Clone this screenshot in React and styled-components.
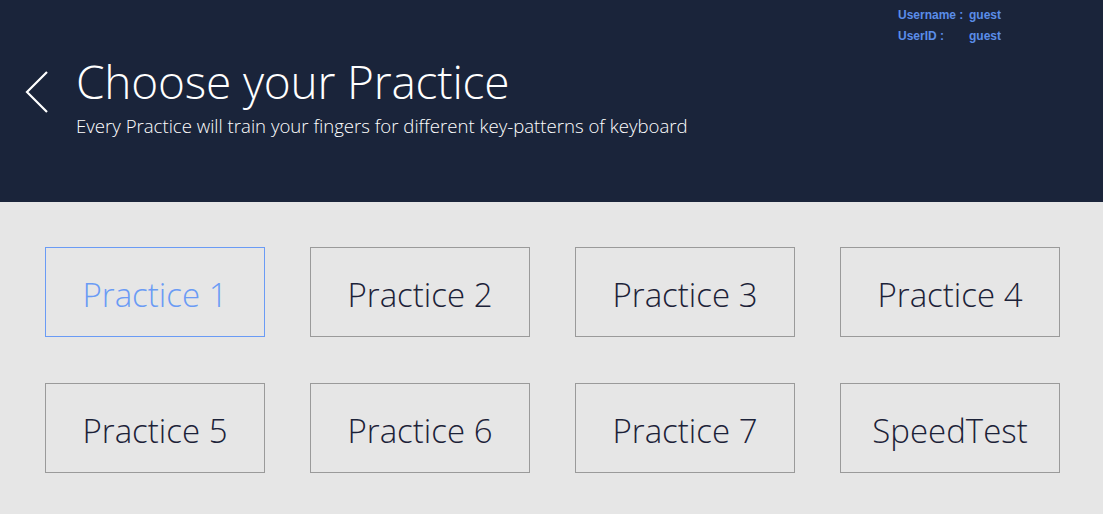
import React from "react";
import styled, { createGlobalStyle } from "styled-components";

const GlobalStyle = createGlobalStyle`
  html, body {
    margin: 0;
    padding: 0;
    background: #e6e6e6;
  }
  body {
    font-family: "Open Sans", "Noto Sans", sans-serif;
  }
`;

const Page = styled.div`
  width: 1103px;
  height: 514px;
  overflow: hidden;
  background: #e6e6e6;
`;

const Header = styled.header`
  height: 202px;
  background: #1a243a;
  position: relative;
  box-sizing: border-box;
  padding: 51px 0 0 24px;
  display: flex;
  align-items: flex-start;
`;

const BackButton = styled.button`
  background: none;
  border: none;
  padding: 0;
  margin: 19px 26px 0 0;
  width: 26px;
  height: 44px;
  cursor: pointer;
  display: flex;
`;

const TitleBlock = styled.div`
  display: flex;
  flex-direction: column;
`;

const Title = styled.h1`
  margin: 0;
  font-weight: 300;
  font-size: 46px;
  line-height: 60px;
  color: #ffffff;
  letter-spacing: -0.2px;
`;

const Subtitle = styled.p`
  margin: 3px 0 0;
  font-weight: 300;
  font-size: 18.6px;
  line-height: 24px;
  color: #ffffff;
`;

const UserInfo = styled.div`
  position: absolute;
  top: 8px;
  left: 898px;
  display: grid;
  grid-template-columns: 71px auto;
  row-gap: 7px;
  font-family: "Liberation Sans", Arial, sans-serif;
  font-weight: bold;
  font-size: 12px;
  line-height: 14px;
  color: #5b8de8;
`;

const Grid = styled.main`
  display: grid;
  grid-template-columns: repeat(4, 220px);
  grid-auto-rows: 90px;
  column-gap: 45px;
  row-gap: 46px;
  padding: 45px 0 0 45px;
`;

const Card = styled.button`
  box-sizing: border-box;
  background: transparent;
  border: 1px solid ${({ active }) => (active ? "#6a9bf5" : "#9a9a9a")};
  color: ${({ active }) => (active ? "#6a9bf5" : "#1c2238")};
  font-family: "Open Sans", "Noto Sans", sans-serif;
  font-weight: 300;
  font-size: 33px;
  padding: 5px 0 0;
  cursor: pointer;
  display: flex;
  align-items: center;
  justify-content: center;
`;

const practices = [
  "Practice 1",
  "Practice 2",
  "Practice 3",
  "Practice 4",
  "Practice 5",
  "Practice 6",
  "Practice 7",
  "SpeedTest",
];

export default function App() {
  return (
    <Page>
      <GlobalStyle />
      <Header>
        <BackButton aria-label="back">
          <svg width="26" height="44" viewBox="0 0 26 44">
            <polyline
              points="23,2 3,22 23,42"
              fill="none"
              stroke="#ffffff"
              strokeWidth="2.2"
            />
          </svg>
        </BackButton>
        <TitleBlock>
          <Title>Choose your Practice</Title>
          <Subtitle>
            Every Practice will train your fingers for different key-patterns of keyboard
          </Subtitle>
        </TitleBlock>
        <UserInfo>
          <span>Username :</span>
          <span>guest</span>
          <span>UserID :</span>
          <span>guest</span>
        </UserInfo>
      </Header>
      <Grid>
        {practices.map((p, i) => (
          <Card key={p} active={i === 0}>
            {p}
          </Card>
        ))}
      </Grid>
    </Page>
  );
}
